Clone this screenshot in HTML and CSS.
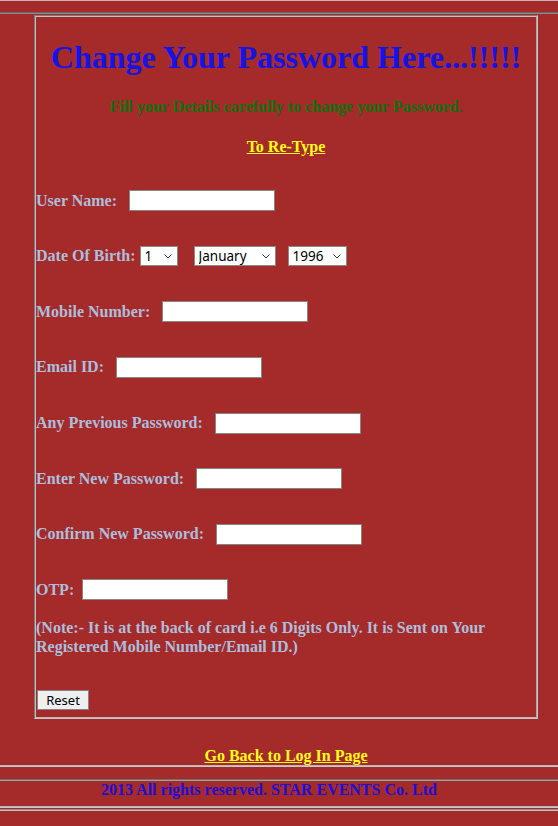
FILE: index.html
```html
<!DOCTYPE html>
<html>
<head>
<meta charset="utf-8">
<title>Change Password</title>
<link rel="stylesheet" href="styles.css">
</head>
<body>
<div class="topline"></div>
<hr class="rule rule-top">
<div class="box">
  <div class="box-inner">
    <h1 class="title">Change Your Password Here...!!!!!</h1>
    <h4 class="subtitle">Fill your Details carefully to change your Password.</h4>
    <h4 class="retype"><a href="#" class="ylink">To Re-Type</a></h4>
    <form class="form">
      <div class="rows">
        <div class="row"><label class="lbl">User Name:</label><input class="txt gap12" type="text"></div>
        <div class="row"><label class="lbl">Date Of Birth:</label>
          <span class="sel gap4 w-day"><select><option>1</option></select><svg class="chev" viewBox="0 0 8 5" width="8" height="5"><path d="M0.5 0.5 L4 4 L7.5 0.5" fill="none" stroke="#333" stroke-width="1"/></svg></span>
          <span class="sel gap16 w-month"><select><option>January</option></select><svg class="chev" viewBox="0 0 8 5" width="8" height="5"><path d="M0.5 0.5 L4 4 L7.5 0.5" fill="none" stroke="#333" stroke-width="1"/></svg></span>
          <span class="sel gap12 w-year"><select><option>1996</option></select><svg class="chev" viewBox="0 0 8 5" width="8" height="5"><path d="M0.5 0.5 L4 4 L7.5 0.5" fill="none" stroke="#333" stroke-width="1"/></svg></span>
        </div>
        <div class="row"><label class="lbl">Mobile Number:</label><input class="txt gap12" type="text"></div>
        <div class="row"><label class="lbl">Email ID:</label><input class="txt gap12" type="text"></div>
        <div class="row"><label class="lbl">Any Previous Password:</label><input class="txt gap12" type="password"></div>
        <div class="row"><label class="lbl">Enter New Password:</label><input class="txt gap12" type="password"></div>
        <div class="row"><label class="lbl">Confirm New Password:</label><input class="txt gap12" type="password"></div>
        <div class="row"><label class="lbl">OTP:</label><input class="txt gap8" type="text"></div>
      </div>
      <p class="note">(Note:- It is at the back of card i.e 6 Digits Only. It is Sent on Your Registered Mobile Number/Email ID.)</p>
      <button type="reset" class="btn">Reset</button>
    </form>
  </div>
</div>
<div class="back"><a href="#" class="ylink">Go Back to Log In Page</a></div>
<hr class="rule rule-a">
<hr class="rule rule-b">
<div class="footer">2013 All rights reserved. STAR EVENTS Co. Ltd</div>
<hr class="rule rule-c">
<hr class="rule rule-d">
</body>
</html>
```
FILE: styles.css
```css
html, body {
  margin: 0;
  padding: 0;
  background: #a52a2a;
  font-family: "Liberation Serif", "Times New Roman", serif;
  font-size: 16px;
}
.topline {
  height: 1px;
  background: #c8b4b4;
}
.rule {
  display: block;
  height: 0;
  margin: 0;
  border: 0;
  border-top: 1px solid #8a8a8a;
  border-bottom: 1px solid #c4c4c4;
}
.rule-top { margin-top: 11px; border-top-color: #6a6a6a; border-bottom-color: #8a8a8a; }
.rule-a { border-top-color: #b8b8b8; border-bottom-color: #c8c8c8; }
.rule-b { margin-top: 11.5px; border-top-color: #707070; border-bottom-color: #a0a0a0; }
.rule-c { margin-top: 7px; border-top-color: #b8b8b8; border-bottom-color: #c8c8c8; }
.rule-d { margin-top: 1px; border-top-color: #909090; border-bottom-color: #c0c0c0; }

.box {
  margin: 1px 0 0 34px;
  width: 504px;
  box-sizing: border-box;
  border: 1px solid;
  border-color: #7a7a7a #c4c4c4 #c4c4c4 #7a7a7a;
}
.box-inner {
  border: 1px solid;
  border-color: #c0c0c0 #a8a8a8 #b8b8b8 #c0c0c0;
  padding: 0 0 7px 0;
}
.title {
  margin: 22.44px 0 0;
  font-size: 32px;
  font-weight: bold;
  color: #1414e6;
  text-align: center;
}
.subtitle {
  margin: 21.44px 0 0;
  font-size: 16px;
  font-weight: bold;
  color: #12700f;
  text-align: center;
}
.retype {
  margin: 22.3px 0 0;
  font-size: 16px;
  font-weight: bold;
  text-align: center;
}
.ylink {
  color: #ffff1a;
  text-decoration: underline;
  font-weight: bold;
}
.form {
  margin: 34px 0 0;
}
.rows {
  display: flex;
  flex-direction: column;
  gap: 34.6px;
}
.row {
  display: flex;
  align-items: center;
  height: 21px;
}
.lbl {
  font-weight: bold;
  color: #abbfdc;
  white-space: nowrap;
}
.gap4 { margin-left: 4px; }
.gap8 { margin-left: 8px; }
.gap12 { margin-left: 12px; }
.gap16 { margin-left: 16px; }
.txt {
  width: 146px;
  height: 21px;
  box-sizing: border-box;
  border: 1px solid #858585;
  background: #fff;
  padding: 1px 2px;
  font: 13px "Noto Sans", sans-serif;
  outline: none;
}
.sel {
  position: relative;
  display: inline-block;
  height: 20px;
}
.sel select {
  appearance: none;
  -webkit-appearance: none;
  width: 100%;
  height: 20px;
  box-sizing: border-box;
  border: 1px solid #8a8a8a;
  background: #fff;
  color: #000;
  border-radius: 0;
  font: 13.5px "Noto Sans", sans-serif;
  padding: 0 0 0 4px;
  line-height: 18px;
  outline: none;
}
.sel .chev {
  position: absolute;
  right: 6px;
  top: 8px;
  pointer-events: none;
}
.w-day { width: 38px; }
.w-month { width: 82px; }
.w-year { width: 59px; }
.note {
  margin: 18.8px 0 0;
  font-weight: bold;
  color: #abbfdc;
  line-height: 18.4px;
}
.btn {
  display: block;
  margin: 33.7px 0 0 1px;
  width: 52px;
  height: 20px;
  box-sizing: border-box;
  border: 1px solid #858585;
  background: #efefef;
  font: 13px "Noto Sans", sans-serif;
  color: #000;
  padding: 0;
  border-radius: 0;
}
.back {
  width: 504px;
  margin: 28.4px 0 0 34px;
  text-align: center;
  line-height: 18.4px;
}
.footer {
  padding-left: 101px;
  font-weight: bold;
  color: #1a10d8;
  line-height: 18.4px;
}
```
